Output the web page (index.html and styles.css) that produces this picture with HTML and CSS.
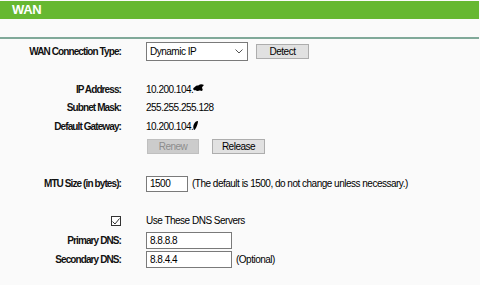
FILE: index.html
```html
<!DOCTYPE html>
<html>
<head>
<meta charset="utf-8">
<link rel="stylesheet" href="styles.css">
</head>
<body>
<div class="title">WAN</div>
<div class="sep"></div>

<div class="row r-type">
  <div class="label">WAN Connection Type:</div>
  <div class="value">
    <div class="select"><span>Dynamic IP</span>
      <svg class="chev" width="8" height="5" viewBox="0 0 8 5"><path d="M0.5 0.5 L4 4 L7.5 0.5" fill="none" stroke="#555" stroke-width="1"/></svg>
    </div>
    <div class="btn btn-detect">Detect</div>
  </div>
</div>

<div class="info">
  <div class="row r-text">
    <div class="label">IP Address:</div>
    <div class="value">10.200.104.<svg class="blob" width="11" height="8" viewBox="0 0 11 8"><path d="M0 5 C1 3 2 3 3 2 C4 1 5 2 6 1 C7 0 9 0 11 1 C10 2 9 3 9 4 C10 5 10 7 8 7 C7 6 6 7 4 7 C3 6 1 7 0 5 Z" fill="#000"/></svg></div>
  </div>
  <div class="row r-text">
    <div class="label">Subnet Mask:</div>
    <div class="value">255.255.255.128</div>
  </div>
  <div class="row r-text">
    <div class="label">Default Gateway:</div>
    <div class="value">10.200.104.<svg class="blob2" width="5" height="9" viewBox="0 0 5 9"><path d="M1 9 C0 7 0 5 1 3 C2 1 3 0 5 0 C5 2 4 5 3 7 C2 8 2 9 1 9 Z" fill="#000"/></svg></div>
  </div>
</div>

<div class="row r-btns">
  <div class="label"></div>
  <div class="value">
    <div class="btn btn-renew">Renew</div>
    <div class="btn btn-release">Release</div>
  </div>
</div>

<div class="row r-mtu">
  <div class="label">MTU Size (in bytes):</div>
  <div class="value">
    <div class="input in-mtu">1500</div>
    <span class="note">(The default is 1500, do not change unless necessary.)</span>
  </div>
</div>

<div class="row r-check">
  <div class="label"><span class="checkbox"><svg width="8" height="7" viewBox="0 0 8 7"><path d="M0.5 3.5 L3 6 L7.5 0.5" fill="none" stroke="#333" stroke-width="1"/></svg></span></div>
  <div class="value">Use These DNS Servers</div>
</div>

<div class="row r-dns1">
  <div class="label">Primary DNS:</div>
  <div class="value"><div class="input in-dns">8.8.8.8</div></div>
</div>

<div class="row r-dns2">
  <div class="label">Secondary DNS:</div>
  <div class="value"><div class="input in-dns">8.8.4.4</div><span class="note">(Optional)</span></div>
</div>
</body>
</html>
```

FILE: styles.css
```css
html, body {
  margin: 0;
  padding: 0;
  background: #fafafa;
}
body {
  font-family: "Liberation Sans", Arial, sans-serif;
  font-size: 10px;
  letter-spacing: -0.5px;
  color: #000;
  width: 480px;
  height: 285px;
  overflow: hidden;
}
.title {
  margin-top: 1px;
  width: 479px;
  height: 18px;
  background: #66b831;
  color: #fff;
  font-weight: bold;
  font-size: 13px;
  letter-spacing: -0.3px;
  line-height: 18px;
  padding-left: 12px;
  box-sizing: border-box;
}
.sep {
  margin-top: 18px;
  width: 479px;
  height: 2px;
  background: #80a999;
}
.row {
  display: grid;
  grid-template-columns: 121px 1fr;
  column-gap: 25px;
  align-items: center;
}
.label {
  text-align: right;
  font-weight: bold;
  font-size: 10px;
  letter-spacing: -0.9px;
  color: #111;
  white-space: nowrap;
}
.value {
  display: flex;
  align-items: center;
  white-space: nowrap;
}
.r-type {
  margin-top: 3px;
  height: 19px;
}
.select {
  box-sizing: border-box;
  width: 102px;
  height: 19px;
  border: 1px solid #7a7a7a;
  background: #fff;
  display: flex;
  align-items: center;
  justify-content: space-between;
  padding: 0 4px 0 3px;
}
.chev {
  display: block;
}
.btn {
  box-sizing: border-box;
  height: 15px;
  border: 1px solid #adadad;
  background: #e1e1e1;
  display: flex;
  align-items: center;
  justify-content: center;
}
.btn-detect {
  width: 53px;
  margin-left: 8px;
}
.info {
  margin-top: 19px;
}
.r-text {
  height: 18.5px;
}
.blob {
  margin-bottom: 2px;
}
.blob2 {
  margin-bottom: 1px;
}
.r-btns {
  margin-top: 3px;
  height: 15px;
}
.btn-renew {
  width: 52px;
  margin-left: 1px;
  background: #cccccc;
  border-color: #bfbfbf;
  color: #8c8c8c;
}
.btn-release {
  width: 53px;
  margin-left: 13px;
}
.r-mtu {
  margin-top: 22px;
  height: 16px;
}
.input {
  box-sizing: border-box;
  height: 16px;
  border: 1px solid #7a7a7a;
  background: #fff;
  padding-left: 3px;
  display: flex;
  align-items: center;
}
.in-mtu {
  width: 42px;
}
.note {
  margin-left: 4px;
}
.r-check {
  margin-top: 20px;
  height: 18px;
}
.r-check .label {
  display: flex;
  justify-content: flex-end;
}
.checkbox {
  box-sizing: border-box;
  width: 10px;
  height: 10px;
  border: 1px solid #333;
  background: #fff;
  display: flex;
  align-items: center;
  justify-content: center;
  margin-top: 1px;
}
.r-dns1 {
  margin-top: 2px;
  height: 17px;
}
.r-dns2 {
  margin-top: 2px;
  height: 17px;
}
.in-dns {
  width: 86px;
  height: 17px;
}
```
